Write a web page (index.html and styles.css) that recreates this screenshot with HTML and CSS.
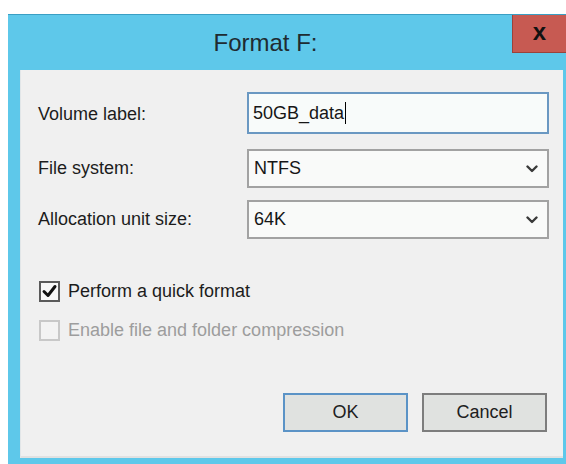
FILE: index.html
```html
<!DOCTYPE html>
<html lang="en">
<head>
<meta charset="utf-8">
<title>Format F:</title>
<link rel="stylesheet" href="styles.css">
</head>
<body>
<div class="window">
  <div class="titlebar">
    <div class="title">Format F:</div>
    <button class="close" type="button" aria-label="Close">x</button>
  </div>
  <div class="panel">
    <div class="fields">
      <label class="field-label">Volume label:</label>
      <div class="textbox">50GB_data<span class="caret"></span></div>

      <label class="field-label">File system:</label>
      <div class="combo">
        <span>NTFS</span>
        <svg class="chevron" width="12" height="8" viewBox="0 0 12 8"><polyline points="1.5,1.5 6,6 10.5,1.5" fill="none" stroke="#3a3a3a" stroke-width="2.4" stroke-linecap="round" stroke-linejoin="round"/></svg>
      </div>

      <label class="field-label">Allocation unit size:</label>
      <div class="combo">
        <span>64K</span>
        <svg class="chevron" width="12" height="8" viewBox="0 0 12 8"><polyline points="1.5,1.5 6,6 10.5,1.5" fill="none" stroke="#3a3a3a" stroke-width="2.4" stroke-linecap="round" stroke-linejoin="round"/></svg>
      </div>
    </div>

    <div class="options">
      <div class="check">
        <span class="box">
          <svg width="17" height="17" viewBox="0 0 17 17"><polyline points="3,8.5 7,12.5 14,3.5" fill="none" stroke="#111" stroke-width="3" stroke-linecap="round" stroke-linejoin="round"/></svg>
        </span>
        <span class="check-text">Perform a quick format</span>
      </div>
      <div class="check disabled">
        <span class="box"></span>
        <span class="check-text">Enable file and folder compression</span>
      </div>
    </div>

    <div class="actions">
      <button class="btn btn-default" type="button">OK</button>
      <button class="btn" type="button">Cancel</button>
    </div>
  </div>
</div>
</body>
</html>
```

FILE: styles.css
```css
* {
  box-sizing: border-box;
}

body {
  margin: 0;
  background: #ffffff;
  font-family: "Liberation Sans", Arial, sans-serif;
}

/* Window frame */
.window {
  margin: 14px 0 0 8px;
  width: 558px;
  height: 450px;
  background: #5ec8ea;
  border-top: 1px solid #3a9fc4;
  display: flex;
  flex-direction: column;
}

.titlebar {
  height: 55px;
  flex-shrink: 0;
  display: flex;
  align-items: flex-start;
}

.title {
  flex: 1;
  align-self: center;
  text-align: center;
  padding-left: 11px;
  font-size: 24px;
  color: #1f2b31;
}

.close {
  width: 54px;
  height: 38px;
  padding: 0 0 4px;
  border: none;
  border-left: 1px solid #9b423b;
  border-bottom: 1px solid #9b423b;
  background: #c75a52;
  color: #111;
  font: bold 24px "Liberation Sans", Arial, sans-serif;
  line-height: 1;
}

/* Client area */
.panel {
  flex: 1;
  margin: 0 3px 6px 12px;
  padding: 22px 14px 0 18px;
  background: #f0f0f0;
  box-shadow: inset 1px 0 0 #e2e6e8, inset 0 -2px 0 #e1e1e1;
  display: flex;
  flex-direction: column;
  color: #1c1c1c;
  font-size: 18px;
}

.fields {
  display: grid;
  grid-template-columns: 209px 302px;
  grid-template-rows: 45px 39px 39px;
  row-gap: 12px;
  align-items: center;
}

.textbox {
  align-self: start;
  height: 42px;
  display: flex;
  align-items: center;
  padding-left: 4px;
  background: #f8fbfa;
  border: 2px solid #6a98c2;
  color: #161616;
}

.caret {
  display: inline-block;
  width: 1px;
  height: 22px;
  margin-left: 1px;
  background: #000;
}

.combo {
  height: 39px;
  display: flex;
  align-items: center;
  justify-content: space-between;
  padding: 0 9px 0 5px;
  background: #f9faf9;
  border: 2px solid #a2a2a2;
  color: #161616;
}

.chevron {
  display: block;
}

/* Checkboxes */
.options {
  margin-top: 42px;
  margin-left: 1px;
  display: flex;
  flex-direction: column;
  gap: 18px;
}

.check {
  display: flex;
  align-items: center;
  gap: 8px;
  height: 21px;
}

.box {
  width: 21px;
  height: 21px;
  display: flex;
  align-items: center;
  justify-content: center;
  border: 2px solid #5a5a5a;
  background: #f7f7f7;
}

.check.disabled .box {
  border-color: #c8c8c8;
  background: #f3f3f3;
}

.check.disabled .check-text {
  color: #9d9d9d;
}

/* Dialog buttons */
.actions {
  margin-top: 52px;
  margin-right: 2px;
  display: flex;
  justify-content: flex-end;
  gap: 14px;
}

.btn {
  width: 125px;
  height: 39px;
  padding: 0;
  background: #e0e2e0;
  border: 2px solid #7d7d7d;
  color: #202020;
  font: 18px "Liberation Sans", Arial, sans-serif;
}

.btn-default {
  border-color: #5b93c6;
}
```
